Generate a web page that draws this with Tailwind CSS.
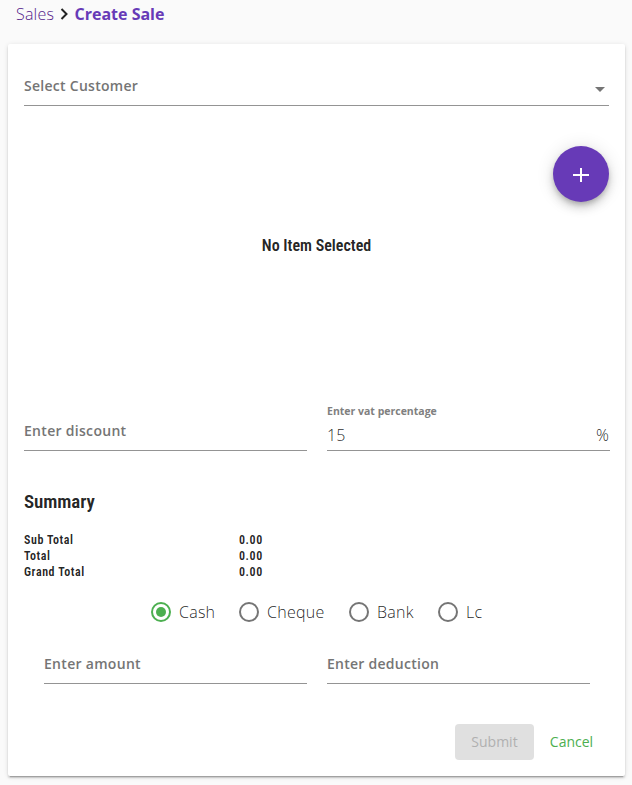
<!DOCTYPE html>
<html lang="en">
<head>
<meta charset="utf-8">
<title>Create Sale</title>
<script src="https://cdn.jsdelivr.net/npm/@tailwindcss/browser@4"></script>
</head>
<body class="h-[785px] overflow-hidden bg-[#fafafa] font-['Open_Sans',sans-serif] text-base font-light text-black/87 whitespace-nowrap">
<nav class="flex h-[44px] items-start pl-4 leading-[28px] text-[#673ab7]">
  <a class="w-[38px] tracking-[0.2px] text-[#551a8b]">Sales</a>
  <svg class="mt-[8px] ml-[6px] h-[12px] w-[8px]" viewBox="0 0 8 12" fill="none" stroke="#222" stroke-width="2"><path d="M1.5 1l5 5-5 5"/></svg>
  <b class="ml-[6.5px] font-bold">Create Sale</b>
</nav>
<main class="mr-[7px] ml-2 h-[732px] rounded-[2px] bg-white px-4 shadow-[0_3px_1px_-2px_rgba(0,0,0,0.2),0_2px_2px_0_rgba(0,0,0,0.14),0_1px_5px_0_rgba(0,0,0,0.12)]">
  <div class="flex h-[62px] items-end justify-between border-b border-[#949494] pb-[9px]">
    <label class="text-sm font-semibold tracking-[0.27px] text-[#757575]">Select Customer</label>
    <svg class="mr-[4px] mb-[4px] h-[5px] w-[10px]" viewBox="0 0 10 5" fill="#757575"><path d="M0 0h10L5 5z"/></svg>
  </div>
  <div class="flex h-[96px] justify-end pt-[40px]">
    <button class="flex size-14 items-center justify-center rounded-full bg-[#673ab7] shadow-[0_3px_5px_-1px_rgba(0,0,0,0.2),0_6px_10px_0_rgba(0,0,0,0.14),0_1px_18px_0_rgba(0,0,0,0.12)]" aria-label="Add item"><svg class="mt-[2px] size-4" viewBox="0 0 16 16" stroke="#fff" stroke-width="2"><path d="M0 8h16M8 1v14"/></svg></button>
  </div>
  <h2 class="mt-[32px] text-center font-['Roboto_Condensed',Roboto,sans-serif] text-base leading-6 font-semibold [font-stretch:75%]">No Item Selected</h2>
  <section class="mt-[143px] flex gap-5">
    <div class="flex h-[50px] w-[283px] shrink-0 items-end border-b border-[#949494] pb-[9px]"><label class="text-sm font-semibold tracking-[0.3px] text-[#757575]">Enter discount</label></div>
    <div class="flex h-[50px] w-[283px] shrink-0 flex-col border-b border-[#949494]">
      <label class="mt-[2px] h-4 text-[10.5px] leading-4 font-bold text-[#808080]">Enter vat percentage</label>
      <div class="mt-[4px] flex justify-between pr-px leading-6"><span>15</span><span>%</span></div>
    </div>
  </section>
  <h3 class="mt-[35px] font-['Roboto_Condensed',Roboto,sans-serif] text-[19px] leading-8 font-semibold tracking-[-0.1px] [font-stretch:75%]">Summary</h3>
  <dl class="mt-[14px] grid grid-cols-[215px_1fr] font-['Roboto_Condensed',Roboto,sans-serif] text-[12px] leading-4 font-semibold tracking-[0.58px] [font-stretch:75%]">
    <dt>Sub Total</dt><dd>0.00</dd>
    <dt>Total</dt><dd>0.00</dd>
    <dt>Grand Total</dt><dd>0.00</dd>
  </dl>
  <div class="mt-[20px] flex h-6 items-center pl-[127px] leading-6 tracking-[0.25px]">
    <div class="flex w-[88px] items-center gap-2"><i class="flex size-5 items-center justify-center rounded-full border-2 border-[#4caf50]"><i class="size-[10px] rounded-full bg-[#4caf50]"></i></i><span>Cash</span></div>
    <div class="flex w-[110px] items-center gap-2"><i class="size-5 rounded-full border-2 border-[#757575]"></i><span>Cheque</span></div>
    <div class="flex w-[89px] items-center gap-2"><i class="size-5 rounded-full border-2 border-[#757575]"></i><span>Bank</span></div>
    <div class="flex items-center gap-2"><i class="size-5 rounded-full border-2 border-[#757575]"></i><span>Lc</span></div>
  </div>
  <section class="mt-[20px] flex gap-5 pl-5">
    <div class="flex h-10 w-[263px] items-end border-b border-[#949494] pb-[9px]"><label class="text-sm font-semibold tracking-[0.3px] text-[#757575]">Enter amount</label></div>
    <div class="flex h-10 w-[263px] items-end border-b border-[#949494] pb-[9px]"><label class="text-sm font-semibold tracking-[0.26px] text-[#757575]">Enter deduction</label></div>
  </section>
  <div class="mt-10 flex justify-end text-sm leading-9 font-normal">
    <button class="h-9 w-[79px] rounded bg-[#e0e0e0] text-[#b0b0b0]">Submit</button>
    <button class="h-9 w-[75px] text-[#4caf50]">Cancel</button>
  </div>
</main>
</body>
</html>
